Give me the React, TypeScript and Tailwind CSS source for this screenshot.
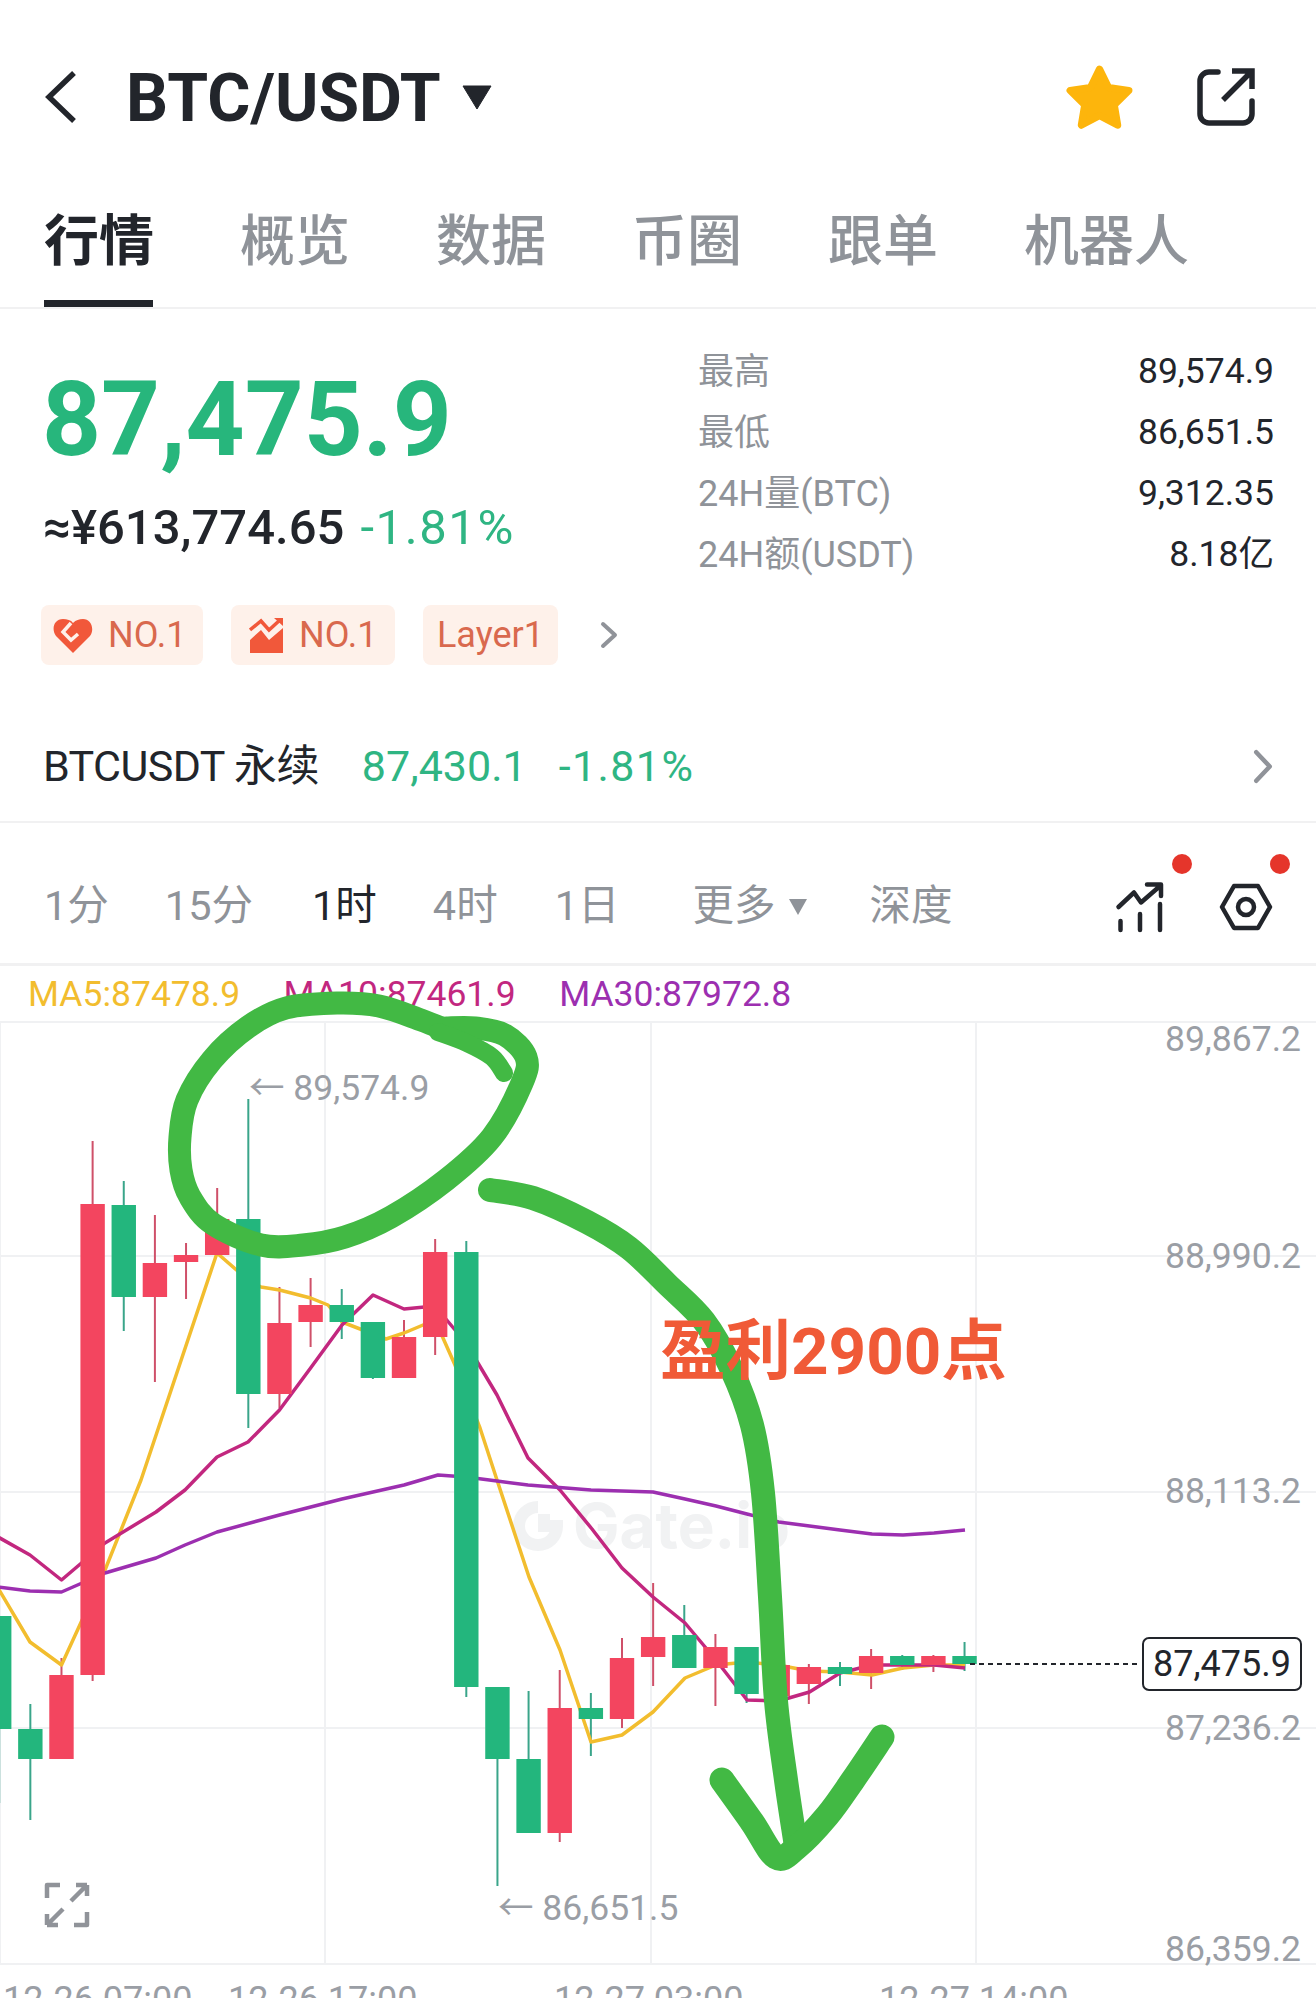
import React from "react";

type P = [number, number];

function smooth(pts: P[]): string {
  let d = `M${pts[0][0]} ${pts[0][1]}`;
  for (let i = 0; i < pts.length - 1; i++) {
    const p0 = pts[i - 1] || pts[i];
    const p1 = pts[i];
    const p2 = pts[i + 1];
    const p3 = pts[i + 2] || p2;
    const c1x = p1[0] + (p2[0] - p0[0]) / 6;
    const c1y = p1[1] + (p2[1] - p0[1]) / 6;
    const c2x = p2[0] - (p3[0] - p1[0]) / 6;
    const c2y = p2[1] - (p3[1] - p1[1]) / 6;
    d += ` C${c1x} ${c1y} ${c2x} ${c2y} ${p2[0]} ${p2[1]}`;
  }
  return d;
}

const poly = (pts: P[]) => pts.map((p) => p.join(",")).join(" ");

// g/r, wickTop, bodyTop, bodyBottom, wickBottom
const candles: [string, number, number, number, number][] = [
  ["g", 1616, 1616, 1729, 1803],
  ["g", 1704, 1729, 1759, 1820],
  ["r", 1658, 1675, 1759, 1759],
  ["r", 1141, 1204, 1675, 1681],
  ["g", 1181, 1205, 1297, 1331],
  ["r", 1215, 1263, 1297, 1382],
  ["r", 1243, 1255, 1262, 1299],
  ["r", 1188, 1219, 1255, 1255],
  ["g", 1099, 1219, 1394, 1428],
  ["r", 1287, 1323, 1394, 1408],
  ["r", 1278, 1305, 1322, 1347],
  ["g", 1289, 1305, 1322, 1339],
  ["g", 1322, 1322, 1378, 1379],
  ["r", 1320, 1337, 1378, 1378],
  ["r", 1239, 1252, 1337, 1355],
  ["g", 1241, 1252, 1687, 1697],
  ["g", 1687, 1687, 1759, 1886],
  ["g", 1691, 1759, 1833, 1833],
  ["r", 1670, 1708, 1833, 1842],
  ["g", 1693, 1708, 1719, 1756],
  ["r", 1638, 1658, 1719, 1728],
  ["r", 1583, 1637, 1657, 1686],
  ["g", 1605, 1635, 1668, 1668],
  ["r", 1634, 1647, 1668, 1706],
  ["g", 1647, 1647, 1694, 1703],
  ["r", 1665, 1665, 1696, 1706],
  ["r", 1664, 1667, 1684, 1704],
  ["g", 1662, 1667, 1674, 1686],
  ["r", 1649, 1656, 1673, 1689],
  ["g", 1655, 1656, 1665, 1670],
  ["r", 1655, 1656, 1665, 1672],
  ["g", 1642, 1656, 1664, 1671],
];

const ma5: P[] = [
  [-2, 1588], [30, 1642], [61.5, 1665], [105, 1570], [141, 1480], [217, 1253], [248, 1280], [261, 1287], [279.5, 1290],
  [310.6, 1298], [328, 1305], [342, 1322], [386, 1339], [404, 1333], [435, 1320], [455, 1365], [480, 1428], [497, 1480],
  [529, 1577], [560, 1650], [591, 1742], [622, 1735], [653, 1712], [685, 1678], [716, 1665], [747, 1662], [778, 1665],
  [809.5, 1671], [840, 1672], [872, 1675], [903, 1668], [934, 1665], [965, 1665],
];
const ma10: P[] = [
  [-2, 1537], [30, 1555], [61.5, 1580], [105, 1543], [156, 1512], [185, 1490], [217, 1457], [248, 1442], [279.5, 1410],
  [310.6, 1368], [342, 1325], [373, 1295], [404, 1309], [435, 1306], [466, 1343], [497, 1395], [528, 1458], [560, 1490],
  [592, 1529], [622, 1568], [653, 1597], [685, 1623], [716, 1660], [747, 1700], [778.6, 1701], [809.5, 1692], [840, 1673],
  [872, 1665], [903, 1665], [934, 1665], [965, 1668],
];
const ma30: P[] = [
  [-2, 1587], [30, 1591], [61.5, 1592], [105, 1573], [156, 1558], [185, 1545], [217, 1532], [279.5, 1515], [342, 1499],
  [404, 1485], [438, 1475], [466, 1477], [497, 1481], [528, 1485], [591, 1490], [653, 1492], [685, 1499], [716, 1506],
  [747, 1514], [778.6, 1522], [809.5, 1526], [840, 1530], [872, 1534], [903, 1535], [934, 1533], [965, 1530],
];

const ring: P[] = [
  [446, 1030], [421, 1020], [379, 1006], [337, 1003], [286, 1008], [248, 1027], [212, 1060], [187, 1100], [180, 1137],
  [181, 1170], [190, 1197], [213, 1224], [261, 1245], [303, 1245], [345, 1237], [391, 1217], [446, 1180], [492, 1137],
  [522, 1083], [526, 1057], [505, 1035], [475, 1028], [446, 1028],
];
const ringTail: P[] = [[438, 1032], [467, 1043], [492, 1057], [504, 1073]];
const shaft: P[] = [
  [490, 1190], [533, 1198], [587, 1222], [629, 1248], [667, 1284], [704, 1321], [731, 1368], [752, 1425], [763, 1493],
  [770, 1597], [776, 1701], [786, 1780], [795, 1840],
];
const head: P[] = [[722, 1780], [752, 1822], [776, 1857], [796, 1848], [827, 1816], [853, 1780], [882, 1737]];

const GREEN = "#23b67d";
const RED = "#f3455f";

function Candles() {
  return (
    <svg className="absolute left-0 top-0" width="1316" height="977" viewBox="0 1021 1316 977">
      {[1022, 1256, 1492, 1728, 1964].map((y) => (
        <line key={y} x1="0" x2="1316" y1={y} y2={y} stroke="#f0f1f3" strokeWidth="2" />
      ))}
      {[0, 325, 651, 976].map((x) => (
        <line key={x} x1={x} x2={x} y1="1021" y2="1964" stroke="#f0f1f3" strokeWidth="2" />
      ))}
      {candles.map(([c, wt, bt, bb, wb], i) => {
        const x = -0.8 + i * 31.14;
        return <line key={i} x1={x} x2={x} y1={wt} y2={wb} stroke={c === "g" ? "#3aa58a" : "#cf5069"} strokeWidth="2" />;
      })}
      <polyline points={poly(ma5)} fill="none" stroke="#f2bd2e" strokeWidth="3.5" strokeLinejoin="round" />
      <polyline points={poly(ma10)} fill="none" stroke="#c2277f" strokeWidth="3.5" strokeLinejoin="round" />
      <polyline points={poly(ma30)} fill="none" stroke="#9c2fb0" strokeWidth="3.5" strokeLinejoin="round" />
      {candles.map(([c, , bt, bb], i) => {
        const x = -0.8 + i * 31.14;
        return <rect key={i} x={x - 12.2} y={bt} width="24.4" height={bb - bt} fill={c === "g" ? GREEN : RED} />;
      })}
      <line x1="970" x2="1140" y1="1664" y2="1664" stroke="#22252b" strokeWidth="2" strokeDasharray="5 4" />
    </svg>
  );
}

function Annotations() {
  return (
    <svg className="absolute left-0 top-0 pointer-events-none" width="1316" height="1998" viewBox="0 0 1316 1998">
      <path d={smooth(ring)} fill="none" stroke="#42b944" strokeWidth="23" strokeLinecap="round" strokeLinejoin="round" />
      <path d={smooth(ringTail)} fill="none" stroke="#42b944" strokeWidth="18" strokeLinecap="round" strokeLinejoin="round" />
      <path d={smooth(shaft)} fill="none" stroke="#42b944" strokeWidth="24" strokeLinecap="round" strokeLinejoin="round" />
      <path d={smooth(head)} fill="none" stroke="#42b944" strokeWidth="25" strokeLinecap="round" strokeLinejoin="round" />
    </svg>
  );
}

function HeartIcon() {
  return (
    <svg width="40" height="35" viewBox="0 0 40 35">
      <path d="M20 35 L3 18 C-2 11 1 1 10 1 C14 1 18 2 20 5 C23 2 26 1 30 1 C38 1 42 11 37 18 Z" fill="#f1583a" />
      <path d="M18 5 L10 14 L18 22 L25 16" fill="none" stroke="#fef1ea" strokeWidth="3.5" />
    </svg>
  );
}

function AreaIcon() {
  return (
    <svg width="35" height="37" viewBox="0 0 35 37">
      <path d="M1 23 L12 13 L20 23 L34 11 V36 H1 Z" fill="#f1583a" />
      <path d="M1 13 L12 4 L20 13 L31 3" fill="none" stroke="#f1583a" strokeWidth="3.5" />
      <path d="M25 1 H34 V9" fill="#f1583a" />
    </svg>
  );
}

function Chevron({ w, h, sw, color }: { w: number; h: number; sw: number; color: string }) {
  return (
    <svg width={w} height={h} viewBox={`0 0 ${w} ${h}`}>
      <path d={`M${sw / 2 + 1} ${sw / 2 + 1} L${w - sw / 2 - 1} ${h / 2} L${sw / 2 + 1} ${h - sw / 2 - 1}`} fill="none" stroke={color} strokeWidth={sw} strokeLinecap="round" strokeLinejoin="round" />
    </svg>
  );
}

const stats: [string, string][] = [
  ["最高", "89,574.9"],
  ["最低", "86,651.5"],
  ["24H量(BTC)", "9,312.35"],
  ["24H额(USDT)", "8.18亿"],
];

export default function App() {
  return (
    <div className="relative w-[1316px] h-[1998px] overflow-hidden bg-white text-[#22252b] [font-family:Roboto,'Noto_Sans_CJK_SC',sans-serif]">
      {/* header */}
      <div className="flex h-[194px] items-center pl-[45px] pr-[61px]">
        <svg width="32" height="54" viewBox="0 0 32 54">
          <path d="M29 3 L4 27 L29 51" fill="none" stroke="#22252b" strokeWidth="5.5" strokeLinejoin="miter" />
        </svg>
        <div className="ml-[49px] pt-[4px] text-[66px] font-bold leading-[70px]">BTC/USDT</div>
        <svg className="ml-[21px]" width="30" height="25" viewBox="0 0 30 25">
          <path d="M1 1 H29 L15 24 Z" fill="#22252b" stroke="#22252b" strokeLinejoin="round" />
        </svg>
        <svg className="ml-auto" width="69" height="66" viewBox="0 0 67 64">
          <path d="M33.5 5 L42.3 22.9 L62 25.7 L47.8 39.6 L51.1 59.3 L33.5 50 L15.9 59.3 L19.2 39.6 L5 25.7 L24.7 22.9 Z" fill="#fdb50c" stroke="#fdb50c" strokeWidth="7" strokeLinejoin="round" />
        </svg>
        <svg className="ml-[63px]" width="58" height="58" viewBox="0 0 58 58">
          <path d="M21 4 H12 A9 9 0 0 0 3 13 V46 A9 9 0 0 0 12 55 H46 A9 9 0 0 0 55 46 V33" fill="none" stroke="#22252b" strokeWidth="5.5" strokeLinecap="round" />
          <path d="M26 32 L54 4 M35 3 H55 V21" fill="none" stroke="#22252b" strokeWidth="5.5" />
        </svg>
      </div>

      {/* tabs */}
      <div className="flex h-[115px] gap-[86px] border-b-2 border-[#f1f1f2] pl-[44px] text-[55px] font-medium leading-[94px] text-[#8f9399]">
        <div className="relative h-[113px] font-bold text-[#22252b]">
          行情
          <div className="absolute bottom-0 left-0 h-[7px] w-[109px] bg-[#22252b]" />
        </div>
        <div>概览</div>
        <div>数据</div>
        <div>币圈</div>
        <div>跟单</div>
        <div>机器人</div>
      </div>

      {/* quote */}
      <div className="flex h-[381px]">
        <div className="w-[698px] pl-[42px] pt-[61px]">
          <div className="text-[103px] font-bold leading-[100px] text-[#27b67c]">87,475.9</div>
          <div className="ml-[1px] mt-[28px] flex text-[49px] font-medium leading-[60px]">
            <span>≈¥613,774.65</span>
            <span className="ml-[16px] font-normal tracking-[1.6px] text-[#2fb583]">-1.81%</span>
          </div>
          <div className="-ml-[1px] mt-[47px] flex items-center text-[36px] text-[#d9694e]">
            <div className="flex h-[60px] w-[162px] items-center gap-[15px] rounded-[8px] bg-[#fef1ea] pl-[12px]">
              <HeartIcon />
              <span>NO.1</span>
            </div>
            <div className="ml-[28px] flex h-[60px] w-[164px] items-center gap-[15px] rounded-[8px] bg-[#fef1ea] pl-[18px]">
              <AreaIcon />
              <span>NO.1</span>
            </div>
            <div className="ml-[28px] flex h-[60px] w-[135px] items-center justify-center rounded-[8px] bg-[#fef1ea]">
              Layer1
            </div>
            <div className="ml-[42px]">
              <Chevron w={18} h={28} sw={4} color="#909399" />
            </div>
          </div>
        </div>
        <div className="flex-1 pr-[42px] pt-[32px] text-[36px]">
          {stats.map(([k, v]) => (
            <div key={k} className="flex h-[61px] items-center justify-between">
              <span className="text-[#8f9399]">{k}</span>
              <span className="text-[35.5px]">{v}</span>
            </div>
          ))}
        </div>
      </div>

      {/* perpetual */}
      <div className="flex h-[133px] items-center border-b-2 border-[#f1f1f2] pl-[43px] pr-[43px] pt-[21px] text-[43px] leading-[50px]">
        <span className="tracking-[-0.6px]">BTCUSDT 永续</span>
        <span className="ml-[43px] text-[#2fb583]">87,430.1</span>
        <span className="ml-[32px] tracking-[1.4px] text-[#2fb583]">-1.81%</span>
        <div className="ml-auto">
          <Chevron w={20} h={35} sw={4.5} color="#909399" />
        </div>
      </div>

      {/* intervals */}
      <div className="flex h-[143px] items-center gap-[56px] border-b-[3px] border-[#f1f1f2] pl-[44px] pr-[43px] pt-[27px] text-[41.5px] text-[#8f9399]">
        <span>1分</span>
        <span>15分</span>
        <span className="ml-[3px] text-[#22252b]">1时</span>
        <span>4时</span>
        <span className="ml-[1px]">1日</span>
        <span className="ml-[17px] flex items-center gap-[13px]">
          更多
          <svg width="20" height="18" viewBox="0 0 20 18">
            <path d="M1 1 H19 L10 17 Z" fill="#8f9399" />
          </svg>
        </span>
        <span className="ml-[5px]">深度</span>
        <div className="relative -mr-[2px] ml-auto">
          <svg width="50" height="52" viewBox="0 0 50 52" className="block">
            <path d="M3.5 26 L19 11.5 L26 21.5 L45 5 M32 3.5 H46 V15" fill="none" stroke="#22252b" strokeWidth="4.5" strokeLinecap="round" strokeLinejoin="round" />
            <path d="M5.5 40 V49 M25 33 V49 M45 23 V49" fill="none" stroke="#22252b" strokeWidth="4.5" strokeLinecap="round" />
          </svg>
          <div className="absolute -right-[27px] -top-[27px] h-[20px] w-[20px] rounded-full bg-[#e5352b]" />
        </div>
        <div className="relative">
          <svg width="54" height="48" viewBox="0 0 54 48" className="block">
            <path d="M3 24 L15 3 H39 L51 24 L39 45 H15 Z" fill="none" stroke="#22252b" strokeWidth="4.5" strokeLinejoin="round" />
            <circle cx="27" cy="24" r="8" fill="none" stroke="#22252b" strokeWidth="4.5" />
          </svg>
          <div className="absolute -right-[17px] -top-[29px] h-[20px] w-[20px] rounded-full bg-[#e5352b]" />
        </div>
      </div>

      {/* MA legend */}
      <div className="flex h-[57px] items-center gap-[43.5px] pl-[28px] text-[35.5px]">
        <span className="text-[#f2bd2e]">MA5:87478.9</span>
        <span className="text-[#c2277f]">MA10:87461.9</span>
        <span className="text-[#9c2fb0]">MA30:87972.8</span>
      </div>

      {/* chart */}
      <div className="relative -mt-[2px] h-[977px]">
        <div className="absolute left-[513px] top-[470px] flex items-center gap-[10px] text-[#f1f2f3]">
          <svg width="50" height="54" viewBox="0 0 50 54">
            <path d="M25 8 A19 19 0 1 0 44 27 H25" fill="none" stroke="#f1f2f3" strokeWidth="12" />
            <rect x="25" y="15" width="12" height="12" fill="#f1f2f3" />
          </svg>
          <span className="text-[62px] font-bold leading-[70px] [font-family:Inter,sans-serif]">Gate.io</span>
        </div>
        <Candles />

        {/* y axis */}
        <span className="absolute right-[15px] top-[-2px] text-[35.5px] leading-[40px] text-[#9a9ea5]">89,867.2</span>
        <span className="absolute right-[15px] top-[215px] text-[35.5px] leading-[40px] text-[#9a9ea5]">88,990.2</span>
        <span className="absolute right-[15px] top-[450px] text-[35.5px] leading-[40px] text-[#9a9ea5]">88,113.2</span>
        <span className="absolute right-[15px] top-[687px] text-[35.5px] leading-[40px] text-[#9a9ea5]">87,236.2</span>
        <span className="absolute right-[15px] top-[908px] text-[35.5px] leading-[40px] text-[#9a9ea5]">86,359.2</span>

        {/* last price */}
        <div className="absolute left-[1142px] top-[616px] flex h-[54px] w-[160px] items-center justify-center rounded-[7px] border-2 border-[#22252b] bg-white text-[36px]">
          87,475.9
        </div>

        {/* high / low */}
        <span className="absolute left-[249px] top-[47px] text-[35.5px] leading-[40px] text-[#9a9ea5]">← 89,574.9</span>
        <span className="absolute left-[498px] top-[867px] text-[35.5px] leading-[40px] text-[#9a9ea5]">← 86,651.5</span>

        {/* expand */}
        <svg className="absolute left-[44px] top-[861px]" width="46" height="46" viewBox="0 0 46 46">
          <path d="M16 3 H3 V16 M30 43 H43 V30" fill="none" stroke="#909399" strokeWidth="4.5" strokeLinejoin="round" />
          <path d="M27 19 L43 3 M43 3 V14 M43 3 H32 M19 27 L3 43 M3 43 V32 M3 43 H14" fill="none" stroke="#909399" strokeWidth="4.5" strokeLinejoin="round" />
        </svg>

        {/* x axis */}
        <span className="absolute left-[3px] top-[958px] text-[36px] leading-[42px] text-[#9a9ea5]">12-26 07:00</span>
        <span className="absolute left-[228px] top-[958px] text-[36px] leading-[42px] text-[#9a9ea5]">12-26 17:00</span>
        <span className="absolute left-[554px] top-[958px] text-[36px] leading-[42px] text-[#9a9ea5]">12-27 03:00</span>
        <span className="absolute left-[879px] top-[958px] text-[36px] leading-[42px] text-[#9a9ea5]">12-27 14:00</span>
      </div>

      <Annotations />
      <div className="absolute left-[660px] top-[1307px] text-[65.5px] font-bold leading-[90px] text-[#f05a37]">盈利2900点</div>
    </div>
  );
}
